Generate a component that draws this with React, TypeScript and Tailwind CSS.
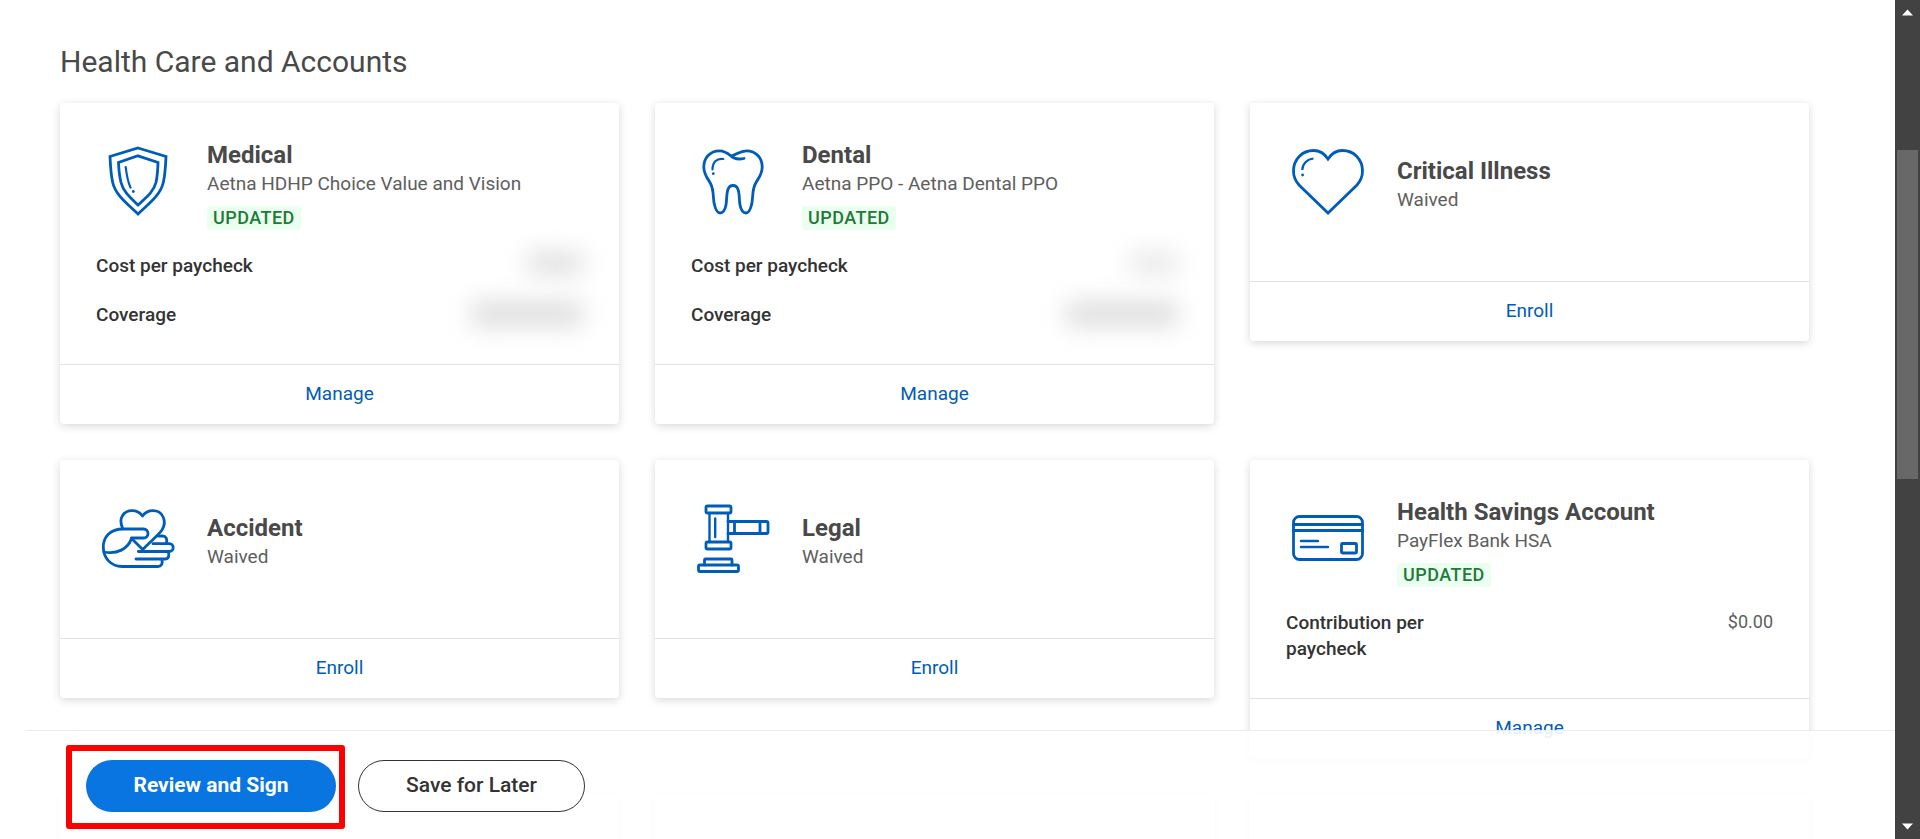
import type { ReactNode } from 'react';

// ---------------------------------------------------------------------------
// Types
// ---------------------------------------------------------------------------

interface BenefitRow {
  label: string;
  value: ReactNode;
}

interface Benefit {
  name: string;
  detail: string;
  icon: ReactNode;
  updated?: boolean;
  rows?: BenefitRow[];
  action: 'Manage' | 'Enroll';
}

// ---------------------------------------------------------------------------
// Icons
// ---------------------------------------------------------------------------

function Icon({ children, viewBox = '0 0 86 86' }: { children: ReactNode; viewBox?: string }) {
  return (
    <svg
      viewBox={viewBox}
      fill="none"
      stroke="#005cb9"
      strokeWidth="2.8"
      strokeLinecap="round"
      strokeLinejoin="round"
      aria-hidden="true"
      className="size-[86px] shrink-0"
    >
      {children}
    </svg>
  );
}

const shieldIcon = (
  <Icon>
    <g strokeLinecap="butt" strokeLinejoin="miter">
      <path d="M42 9 70 17.5C69.6 27 69 36 67.3 43.5 64.5 56 53 64.5 42 75 31 64.5 19.5 56 16.7 43.5 15 36 14.4 27 14 17.5Z" />
      <path d="M42 16.8 62 23.5C61.8 31 61.4 37 60 43.5 57.5 53 50 58.5 42 66 34 58.5 27.5 53 25 43.5 23.4 37 22.8 31 22.5 23.5Z" />
    </g>
    <path d="M29.7 28C30.5 35 32 43 34.5 48.5" strokeWidth="2.2" />
    <circle cx="37.3" cy="52.5" r="1.4" fill="#005cb9" stroke="none" />
  </Icon>
);

const toothIcon = (
  <Icon>
    <path d="M40 17C36 13.5 33 11.8 28.5 11.8 19 11.8 12.8 19 12.8 28 12.8 36 17 39.5 19.5 44.5 23.5 52 21.5 59 23.5 66 24.8 71 26.5 74 29 74 32 74 34 71 35 66 36.3 59 34.5 46.5 42 46.5 49.5 46.5 47.7 59 49 66 50 71 52 74 55 74 57.5 74 59.2 71 60.5 66 62.5 59 60.5 52 64.5 44.5 67 39.5 71.2 36 71.2 28 71.2 19 65 11.8 55.5 11.8 49 11.8 46 15.5 40 17ZM40 17C43 20 48 20.5 53 19.5" />
    <path d="M32.3 20C26 19 21.5 23 21.5 30.5" strokeWidth="2.2" />
    <circle cx="22.3" cy="34.7" r="1.4" fill="#005cb9" stroke="none" />
  </Icon>
);

const heartIcon = (
  <Icon>
    <path
      d="M42 20C38.5 14.5 33.5 11.5 27.5 11.5 16 11.5 7.5 20.5 7.5 32 7.5 37.5 9.5 42 13 46L42 74 71 46C74.5 42 76.5 37.5 76.5 32 76.5 20.5 68 11.5 56.5 11.5 50.5 11.5 45.5 14.5 42 20Z"
      strokeLinejoin="miter"
    />
    <path d="M27.5 19.5C21 20 16.3 25 16.3 31" strokeWidth="2.2" strokeLinecap="butt" />
    <circle cx="16.6" cy="36" r="1.4" fill="#005cb9" stroke="none" />
  </Icon>
);

const handHeartIcon = (
  <Icon viewBox="0 4 86 86">
    <path d="M26.5 36C22 26 28 18.7 36 18.7 40.5 18.7 44 20.5 46.5 24 49 20.5 52.5 18.7 57 18.7 66.5 18.7 71.5 29 66 38 63 42.5 54 50 46.7 57.5L35.5 46.5" />
    <path d="M35.5 46H47.5A4.5 4.5 0 0 0 47.5 37H27C14 37 7.3 45 7.3 55 7.3 66 15 74.5 26 74.5H62C65 74.5 67 72 66 68" />
    <path d="M35.5 46.5C32 57 21 62.5 8 60" />
    <path d="M62 44H66.5C70 44 71.5 47 70.5 51M57 51.7H73.3A3.9 3.9 0 0 1 73.3 59.5H42.3M72 60C74 63 72.5 67 69 67H40" />
  </Icon>
);

const gavelIcon = (
  <Icon viewBox="0 4 86 86">
    <rect x="15" y="14" width="25" height="7" rx="1.5" />
    <path d="M18.5 21V50M37 21V50M24.2 26.5V45" strokeWidth="2.4" />
    <rect x="15" y="50" width="25" height="7" rx="1.5" />
    <path d="M37 29.5H75.5A1.5 1.5 0 0 1 77 31V40A1.5 1.5 0 0 1 75.5 41.5H37M43.5 29.5V41.5M69 29.5V41.5" />
    <path d="M13.5 73V68A1 1 0 0 1 14.5 67H40A1 1 0 0 1 41 68V73" />
    <rect x="7.5" y="73" width="40" height="6.5" rx="1.5" />
  </Icon>
);

const cardIcon = (
  <Icon viewBox="0 4 86 86">
    <rect x="7.5" y="24.5" width="69" height="43" rx="6" />
    <path d="M7.5 32.5H76.5M7.5 38.5H76.5" strokeWidth="3" />
    <path d="M15 49H32M15 55H42" strokeWidth="2.4" />
    <rect x="55.5" y="51.5" width="15" height="9.5" rx="1" />
  </Icon>
);

// ---------------------------------------------------------------------------
// Data
// ---------------------------------------------------------------------------

const amountHidden = (
  <span className="block h-5 w-14 rounded bg-[#dcdcdc] blur-[12px]" aria-hidden="true" />
);
const amountHiddenLight = (
  <span className="block h-5 w-12 rounded bg-[#e6e6e6] blur-[12px]" aria-hidden="true" />
);
const coverageHidden = (
  <span className="block h-6 w-28 rounded bg-[#dcdcdc] blur-[12px]" aria-hidden="true" />
);

const benefits: Benefit[] = [
  {
    name: 'Medical',
    detail: 'Aetna HDHP Choice Value and Vision',
    icon: shieldIcon,
    updated: true,
    rows: [
      { label: 'Cost per paycheck', value: amountHidden },
      { label: 'Coverage', value: coverageHidden },
    ],
    action: 'Manage',
  },
  {
    name: 'Dental',
    detail: 'Aetna PPO - Aetna Dental PPO',
    icon: toothIcon,
    updated: true,
    rows: [
      { label: 'Cost per paycheck', value: amountHiddenLight },
      { label: 'Coverage', value: coverageHidden },
    ],
    action: 'Manage',
  },
  { name: 'Critical Illness', detail: 'Waived', icon: heartIcon, action: 'Enroll' },
  { name: 'Accident', detail: 'Waived', icon: handHeartIcon, action: 'Enroll' },
  { name: 'Legal', detail: 'Waived', icon: gavelIcon, action: 'Enroll' },
  {
    name: 'Health Savings Account',
    detail: 'PayFlex Bank HSA',
    icon: cardIcon,
    updated: true,
    rows: [{ label: 'Contribution per paycheck', value: '$0.00' }],
    action: 'Manage',
  },
];

// ---------------------------------------------------------------------------
// Components
// ---------------------------------------------------------------------------

function BenefitCard({ benefit }: { benefit: Benefit }) {
  return (
    <article className="rounded bg-white shadow-[0_2px_8px_rgba(31,38,46,0.18)]">
      <div className="p-9">
        <div className="mb-[14px] flex min-h-[92px] gap-[25px]">
          {benefit.icon}
          <div className="flex flex-col items-start justify-center">
            <h3 className="text-[24px] leading-[30px] font-bold text-[#494949]">{benefit.name}</h3>
            <p className="text-[19px] leading-[28px] text-[#5e5e5e]">{benefit.detail}</p>
            {benefit.updated && (
              <span className="mt-2 rounded-[3px] bg-[#ebfff0] px-[6px] text-[18px] leading-[24px] font-medium tracking-wide text-[#217a37]">
                UPDATED
              </span>
            )}
          </div>
        </div>

        {benefit.rows && (
          <dl className="flex flex-col gap-[23px] pt-2">
            {benefit.rows.map((row) => (
              <div key={row.label} className="flex items-start justify-between">
                <dt className="w-2/5 text-[19px] leading-[26px] font-medium text-[#333333]">
                  {row.label}
                </dt>
                <dd className="text-[18px] leading-[24px] text-[#5e5e5e]">{row.value}</dd>
              </div>
            ))}
          </dl>
        )}
      </div>

      <button
        type="button"
        className="h-[60px] w-full border-t border-[#dfe2e6] text-[19px] text-[#005cb9]"
      >
        {benefit.action}
      </button>
    </article>
  );
}

function ActionBar() {
  return (
    <footer className="absolute right-0 bottom-0 left-[25px] flex gap-[22px] border-t border-[#ececec] bg-white/90 pt-[29px] pb-[27px] pl-[61px]">
      <div className="relative">
        <button
          type="button"
          className="h-[52px] w-[250px] rounded-full bg-[#0875e1] text-[21px] font-bold text-white"
        >
          Review and Sign
        </button>
        <div className="pointer-events-none absolute -top-[15px] -right-[9px] -bottom-[17px] -left-5 rounded-[3px] border-6 border-[#ff0000]" />
      </div>
      <button
        type="button"
        className="h-[52px] w-[227px] rounded-full border border-[#333333] bg-white text-[21px] font-medium text-[#333333]"
      >
        Save for Later
      </button>
    </footer>
  );
}

function ScrollTrack() {
  return (
    <aside className="flex w-[25px] shrink-0 flex-col items-center bg-[#424242]" aria-hidden="true">
      <svg viewBox="0 0 25 25" className="size-[25px]" fill="#ffffff">
        <path d="M12.5 9.5 18 15.5H7Z" />
      </svg>
      <div className="min-h-0 flex-[125]" />
      <div className="min-h-0 w-[21px] flex-[329] bg-[#686868]" />
      <div className="min-h-0 flex-[335]" />
      <svg viewBox="0 0 25 25" className="size-[25px]" fill="#ffffff">
        <path d="M12.5 15.5 18 9.5H7Z" />
      </svg>
    </aside>
  );
}

export default function App() {
  return (
    <div className="flex h-screen overflow-hidden bg-white font-['Roboto',sans-serif]">
      <div className="relative min-w-0 flex-1 overflow-hidden">
        <main className="pt-[43px] pr-[86px] pl-[60px]">
          <h2 className="mb-[22px] text-[30px] leading-[38px] text-[#494949]">
            Health Care and Accounts
          </h2>
          <div className="grid grid-cols-3 items-start gap-9">
            {benefits.map((benefit) => (
              <BenefitCard key={benefit.name} benefit={benefit} />
            ))}
            {[0, 1, 2].map((slot) => (
              <div
                key={slot}
                className="h-60 rounded bg-white shadow-[0_2px_8px_rgba(31,38,46,0.18)]"
              />
            ))}
          </div>
        </main>
        <ActionBar />
      </div>
      <ScrollTrack />
    </div>
  );
}
